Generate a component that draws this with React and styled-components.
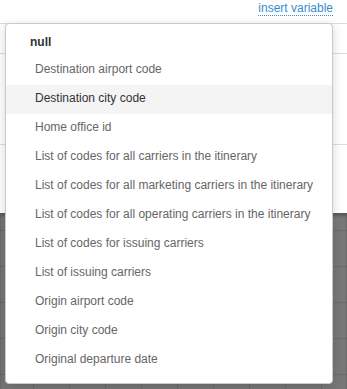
import React from 'react';
import styled, { createGlobalStyle } from 'styled-components';

const GlobalStyle = createGlobalStyle`
  html, body {
    margin: 0;
    padding: 0;
    background: #fff;
    font-family: "Liberation Sans", Arial, sans-serif;
  }
`;

const Page = styled.div`
  position: relative;
  height: 389px;
  overflow: hidden;
  display: flex;
  flex-direction: column;
`;

const TopBar = styled.div`
  height: 23px;
  display: flex;
  justify-content: flex-end;
  align-items: flex-start;
  padding-right: 14px;
`;

const InsertLink = styled.a`
  margin-top: 1px;
  font-size: 12px;
  line-height: 14px;
  color: #3a8ccf;
  text-decoration: none;
  border-bottom: 1px dotted #3a8ccf;
  cursor: pointer;
`;

const FormArea = styled.div`
  height: 190px;
  border-top: 1px solid #ddd;
  box-sizing: border-box;
  display: flex;
  flex-direction: column;
`;

const FieldRow = styled.div`
  height: ${p => p.height}px;
  border-bottom: 1px solid #ddd;
`;

const Backdrop = styled.div`
  flex: 1;
  background-color: #787878;
  background-image:
    linear-gradient(to right, #6c6c6c 1px, transparent 1px),
    linear-gradient(to bottom, #6c6c6c 1px, transparent 1px);
  background-size: 36px 36px;
  background-position: -3px 17px;
  box-shadow: inset 0 3px 3px rgba(0, 0, 0, 0.25);
`;

const Menu = styled.ul`
  position: absolute;
  top: 23px;
  left: 5px;
  width: 328px;
  height: 361px;
  box-sizing: border-box;
  margin: 0;
  padding: 5px 0 0;
  list-style: none;
  background: #fff;
  border: 1px solid #c9c9c9;
  border-radius: 4px;
  box-shadow: 0 3px 12px rgba(0, 0, 0, 0.16);
  overflow: hidden;
`;

const MenuHeader = styled.li`
  padding: 6px 0 6px 24px;
  font-size: 12px;
  line-height: 15px;
  font-weight: bold;
  color: #333;
`;

const MenuItem = styled.li`
  padding: 6px 0 8px 29px;
  font-size: 12px;
  line-height: 15px;
  color: ${p => (p.active ? '#333' : '#666')};
  background: ${p => (p.active ? '#f4f4f4' : 'transparent')};
  white-space: nowrap;
  cursor: pointer;
`;

const variables = [
  'Destination airport code',
  'Destination city code',
  'Home office id',
  'List of codes for all carriers in the itinerary',
  'List of codes for all marketing carriers in the itinerary',
  'List of codes for all operating carriers in the itinerary',
  'List of codes for issuing carriers',
  'List of issuing carriers',
  'Origin airport code',
  'Origin city code',
  'Original departure date',
  'Original departure time',
];

export default function App() {
  return (
    <Page>
      <GlobalStyle />
      <TopBar>
        <InsertLink>insert variable</InsertLink>
      </TopBar>
      <FormArea>
        <FieldRow height={29} />
        <FieldRow height={90} />
      </FormArea>
      <Backdrop />
      <Menu>
        <MenuHeader>null</MenuHeader>
        {variables.map(name => (
          <MenuItem key={name} active={name === 'Destination city code'}>
            {name}
          </MenuItem>
        ))}
      </Menu>
    </Page>
  );
}
